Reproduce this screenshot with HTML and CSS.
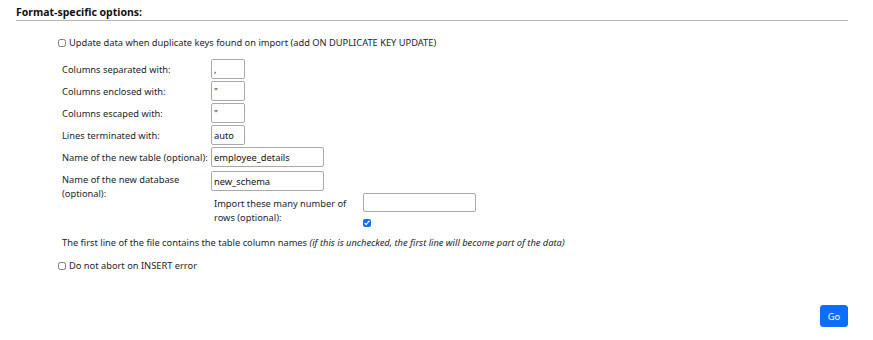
FILE: index.html
```html
<!DOCTYPE html>
<html lang="en">
<head>
    <meta charset="UTF-8">
    <title>Import - Format-specific options</title>
    <link rel="stylesheet" href="styles.css">
</head>
<body>

<div class="page">
    <h3 class="section-title">Format-specific options:</h3>

    <div class="options">
        <div class="check-row first">
            <input type="checkbox" id="replace">
            <label for="replace">Update data when duplicate keys found on import (add ON DUPLICATE KEY UPDATE)</label>
        </div>

        <div class="fields">
            <div class="field">
                <label for="sep">Columns separated with:</label>
                <input type="text" id="sep" class="short" value=",">
            </div>
            <div class="field">
                <label for="enc">Columns enclosed with:</label>
                <input type="text" id="enc" class="short" value="&quot;">
            </div>
            <div class="field">
                <label for="esc">Columns escaped with:</label>
                <input type="text" id="esc" class="short" value="&quot;">
            </div>
            <div class="field">
                <label for="term">Lines terminated with:</label>
                <input type="text" id="term" class="short" value="auto">
            </div>
            <div class="field">
                <label for="tbl">Name of the new table (optional):</label>
                <input type="text" id="tbl" class="long" value="employee_details">
            </div>
            <div class="field tall">
                <label for="db">Name of the new database (optional):</label>
                <input type="text" id="db" class="long" value="new_schema">
            </div>
            <div class="nested">
                <label for="rows">Import these many number of rows (optional):</label>
                <div class="nested-inputs">
                    <input type="text" id="rows" class="wide">
                    <input type="checkbox" id="colnames" checked>
                </div>
            </div>
        </div>

        <p class="note">The first line of the file contains the table column names <em>(if this is unchecked, the first line will become part of the data)</em></p>

        <div class="check-row">
            <input type="checkbox" id="ignore">
            <label for="ignore">Do not abort on INSERT error</label>
        </div>
    </div>

    <div class="actions">
        <button type="submit">Go</button>
    </div>
</div>

</body>
</html>
```

FILE: styles.css
```css
body {
    margin: 0;
    font-family: "Noto Sans", "Open Sans", sans-serif;
    font-size: 9.3px;
    color: #212529;
    background-color: #fff;
}

.page {
    padding: 5px 25px 0 16px;
}

.section-title {
    margin: 0;
    font-size: 10.5px;
    font-weight: bold;
    color: #111;
    padding-bottom: 1px;
    border-bottom: 1px solid #b5b5b5;
}

.options {
    padding-left: 42px;
    padding-top: 15px;
}

.check-row {
    display: flex;
    align-items: center;
    gap: 3px;
}

.check-row input[type="checkbox"] {
    width: 8px;
    height: 8px;
    margin: 0;
}

.fields {
    padding-left: 4px;
    margin-top: 10px;
}

.field {
    display: flex;
    align-items: center;
    margin-bottom: 2px;
}

.field label {
    width: 149px;
    flex-shrink: 0;
}

.field.tall {
    align-items: flex-start;
    margin-top: 4px;
}

.field.tall label {
    width: 120px;
    margin-right: 29px;
    line-height: 14px;
    padding-top: 2px;
}

input[type="text"] {
    font-family: inherit;
    font-size: 9.3px;
    color: #111;
    height: 20px;
    box-sizing: border-box;
    border: 1px solid #a8a8a8;
    border-radius: 2px;
    padding: 0 2px;
    margin: 0;
}

input.short {
    width: 34px;
}

input.long {
    width: 113px;
}

input.wide {
    width: 113px;
    height: 19px;
}

.nested {
    display: flex;
    margin-left: 152px;
    margin-top: -10px;
}

.nested label {
    width: 140px;
    margin-right: 9px;
    line-height: 14px;
    padding-top: 4px;
}

.nested-inputs {
    display: flex;
    flex-direction: column;
    align-items: flex-start;
    gap: 7px;
}

.nested-inputs input[type="checkbox"] {
    width: 8px;
    height: 8px;
    margin: 0;
    accent-color: #0d6efd;
}

.note {
    margin: 9px 0 10px 4px;
}

.actions {
    display: flex;
    justify-content: flex-end;
    margin-top: 33px;
}

button {
    font-family: inherit;
    font-size: 9.3px;
    color: #fff;
    background-color: #0d6efd;
    border: 1px solid #0d6efd;
    border-radius: 3px;
    width: 28px;
    height: 22px;
    padding: 0;
    cursor: pointer;
}
```
